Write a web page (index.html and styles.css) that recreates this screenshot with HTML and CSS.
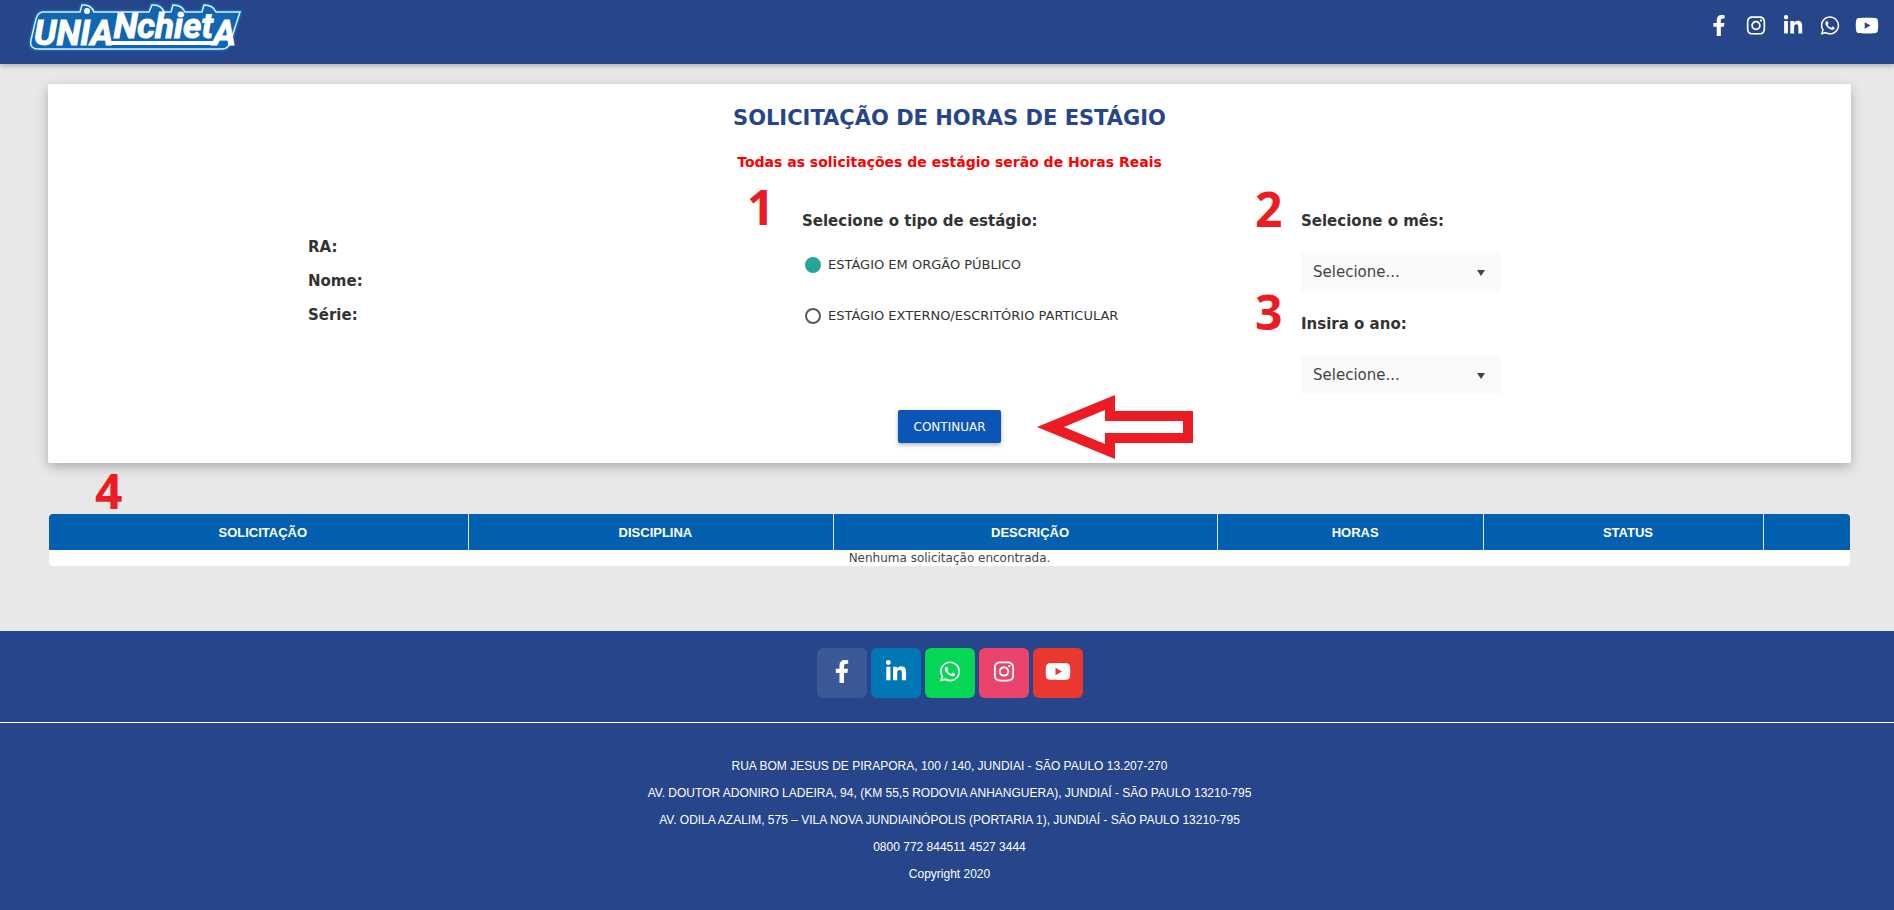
FILE: index.html
```html
<!DOCTYPE html>
<html lang="pt-BR">
<head>
    <meta charset="UTF-8">
    <meta name="viewport" content="width=device-width, initial-scale=1.0">
    <title>Solicitação de Horas de Estágio</title>
    <link rel="stylesheet" href="styles.css">
</head>
<body>

    <!-- Ícones usados no topo e no rodapé -->
    <svg class="sprite" aria-hidden="true">
        <symbol id="facebook" viewBox="0 0 320 512"><path d="M279.14 288l14.22-92.66h-88.91v-60.13c0-25.35 12.42-50.06 52.24-50.06h40.42V6.26S260.43 0 225.36 0c-73.22 0-121.08 44.38-121.08 124.72v70.62H22.89V288h81.39v224h100.17V288z"/></symbol>
        <symbol id="instagram" viewBox="0 0 448 512"><path d="M224.1 141c-63.6 0-114.9 51.3-114.9 114.9s51.3 114.9 114.9 114.9S339 319.5 339 255.9 287.7 141 224.1 141zm0 189.6c-41.1 0-74.7-33.5-74.7-74.7s33.5-74.7 74.7-74.7 74.7 33.5 74.7 74.7-33.6 74.7-74.7 74.7zm146.4-194.3c0 14.9-12 26.8-26.8 26.8-14.9 0-26.8-12-26.8-26.8s12-26.8 26.8-26.8 26.8 12 26.8 26.8zm76.1 27.2c-1.7-35.9-9.9-67.7-36.2-93.9-26.2-26.2-58-34.4-93.9-36.2-37-2.1-147.9-2.1-184.9 0-35.8 1.7-67.6 9.9-93.9 36.1s-34.4 58-36.2 93.9c-2.1 37-2.1 147.9 0 184.9 1.7 35.9 9.9 67.7 36.2 93.9s58 34.4 93.9 36.2c37 2.1 147.9 2.1 184.9 0 35.9-1.7 67.7-9.9 93.9-36.2 26.2-26.2 34.4-58 36.2-93.9 2.1-37 2.1-147.8 0-184.8zM398.8 388c-7.8 19.6-22.9 34.7-42.6 42.6-29.5 11.7-99.5 9-132.1 9s-102.7 2.6-132.1-9c-19.6-7.8-34.7-22.9-42.6-42.6-11.7-29.5-9-99.5-9-132.1s-2.6-102.7 9-132.1c7.8-19.6 22.9-34.7 42.6-42.6 29.5-11.7 99.5-9 132.1-9s102.7-2.6 132.1 9c19.6 7.8 34.7 22.9 42.6 42.6 11.7 29.5 9 99.5 9 132.1s2.7 102.7-9 132.1z"/></symbol>
        <symbol id="linkedin" viewBox="0 0 448 512"><path d="M100.28 448H7.4V148.9h92.88zM53.79 108.1C24.09 108.1 0 83.5 0 53.8a53.79 53.79 0 0 1 107.58 0c0 29.7-24.1 54.3-53.79 54.3zM447.9 448h-92.68V302.4c0-34.7-.7-79.2-48.29-79.2-48.29 0-55.69 37.7-55.69 76.7V448h-92.78V148.9h89.08v40.8h1.3c12.4-23.5 42.69-48.3 87.88-48.3 94 0 111.28 61.9 111.28 142.3V448z"/></symbol>
        <symbol id="whatsapp" viewBox="0 0 448 512"><path d="M380.9 97.1C339 55.1 283.2 32 223.9 32c-122.4 0-222 99.6-222 222 0 39.1 10.2 77.3 29.6 111L0 480l117.7-30.9c32.4 17.7 68.9 27 106.1 27h.1c122.3 0 224.1-99.6 224.1-222 0-59.3-25.2-115-67.1-157zm-157 341.6c-33.2 0-65.7-8.9-94-25.7l-6.7-4-69.8 18.3L72 359.2l-4.4-7c-18.5-29.4-28.2-63.3-28.2-98.2 0-101.7 82.8-184.5 184.6-184.5 49.3 0 95.6 19.2 130.4 54.1 34.8 34.9 56.2 81.2 56.1 130.5 0 101.8-84.9 184.6-186.6 184.6zm101.2-138.2c-5.5-2.8-32.8-16.2-37.9-18-5.1-1.9-8.8-2.8-12.5 2.8-3.7 5.6-14.3 18-17.6 21.8-3.2 3.7-6.5 4.2-12 1.4-32.6-16.3-54-29.1-75.5-66-5.7-9.8 5.7-9.1 16.3-30.3 1.8-3.7.9-6.9-.5-9.7-1.4-2.8-12.5-30.1-17.1-41.2-4.5-10.8-9.1-9.3-12.5-9.5-3.2-.2-6.9-.2-10.6-.2-3.7 0-9.7 1.4-14.8 6.9-5.1 5.6-19.4 19-19.4 46.3 0 27.3 19.9 53.7 22.6 57.4 2.8 3.7 39.1 59.7 94.8 83.8 35.2 15.2 49 16.5 66.6 13.9 10.7-1.6 32.8-13.4 37.4-26.4 4.6-13 4.6-24.1 3.2-26.4-1.3-2.5-5-3.9-10.5-6.6z"/></symbol>
        <symbol id="youtube" viewBox="0 0 576 512"><path d="M549.655 124.083c-6.281-23.65-24.787-42.276-48.284-48.597C458.781 64 288 64 288 64S117.22 64 74.629 75.486c-23.497 6.322-42.003 24.947-48.284 48.597-11.412 42.867-11.412 132.305-11.412 132.305s0 89.438 11.412 132.305c6.281 23.65 24.787 41.5 48.284 47.821C117.22 448 288 448 288 448s170.78 0 213.371-11.486c23.497-6.321 42.003-24.171 48.284-47.821 11.412-42.867 11.412-132.305 11.412-132.305s0-89.438-11.412-132.305zm-317.51 213.508V175.185l142.739 81.205-142.739 81.201z"/></symbol>
    </svg>

    <!-- Topo -->
    <header class="topbar">
        <a href="#" class="logo" aria-label="UniAnchieta">
            <svg width="216" height="52" viewBox="0 0 216 52">
                <path class="logo-glow" d="M16 12H53L55 5Q64 4 67 12H122L125 5Q134 4 137 12H144L146 5Q155 5 158 12H175L177 5Q186 5 189 12H213L203 43Q201 49 195 49H12Q2 49 4 40L9 19Q11 12 16 12Z"/>
                <path class="logo-line" d="M16 12H53L55 5Q64 4 67 12H122L125 5Q134 4 137 12H144L146 5Q155 5 158 12H175L177 5Q186 5 189 12H213L203 43Q201 49 195 49H12Q2 49 4 40L9 19Q11 12 16 12Z"/>
                <circle class="logo-dot" cx="60" cy="11" r="3"/>
                <path class="logo-bar" d="M80 43H190"/>
                <text class="logo-text" x="7" y="45">UNIA<tspan dy="-7">Nchiet</tspan><tspan dy="7">A</tspan></text>
            </svg>
        </a>
        <nav class="topbar-social">
            <a href="#" aria-label="Facebook"><svg><use href="#facebook"/></svg></a>
            <a href="#" aria-label="Instagram"><svg><use href="#instagram"/></svg></a>
            <a href="#" aria-label="LinkedIn"><svg><use href="#linkedin"/></svg></a>
            <a href="#" aria-label="WhatsApp"><svg><use href="#whatsapp"/></svg></a>
            <a href="#" aria-label="YouTube"><svg><use href="#youtube"/></svg></a>
        </nav>
    </header>

    <main>
        <!-- Formulário -->
        <form class="card">
            <h1>SOLICITAÇÃO DE HORAS DE ESTÁGIO</h1>
            <p class="aviso">Todas as solicitações de estágio serão de Horas Reais</p>

            <div class="form-grid">
                <div class="aluno">
                    <p>RA:</p>
                    <p>Nome:</p>
                    <p>Série:</p>
                </div>
                <fieldset class="tipo">
                    <legend>Selecione o tipo de estágio:</legend>
                    <span class="passo">1</span>
                    <label class="radio"><input type="radio" name="tipo" checked>ESTÁGIO EM ORGÃO PÚBLICO</label>
                    <label class="radio"><input type="radio" name="tipo">ESTÁGIO EXTERNO/ESCRITÓRIO PARTICULAR</label>
                </fieldset>
                <div class="periodo">
                    <div class="campo">
                        <span class="passo">2</span>
                        <label for="mes">Selecione o mês:</label>
                        <div class="select-box">
                            <select id="mes"><option>Selecione...</option></select>
                        </div>
                    </div>
                    <div class="campo">
                        <span class="passo">3</span>
                        <label for="ano">Insira o ano:</label>
                        <div class="select-box">
                            <select id="ano"><option>Selecione...</option></select>
                        </div>
                    </div>
                </div>
            </div>

            <div class="acoes">
                <button type="button" class="btn">CONTINUAR</button>
                <svg class="seta" width="156" height="64" viewBox="0 0 156 64" aria-hidden="true">
                    <path fill-rule="evenodd" d="M0 32L78 0V16H156V48H78V64ZM27 32L68 49V38H146V26H68V15Z"/>
                </svg>
            </div>
        </form>

        <!-- Solicitações -->
        <section class="lista">
            <span class="passo">4</span>
            <table>
                <colgroup>
                    <col class="col-solicitacao">
                    <col class="col-disciplina">
                    <col class="col-descricao">
                    <col class="col-horas">
                    <col class="col-status">
                    <col>
                </colgroup>
                <thead>
                    <tr>
                        <th>SOLICITAÇÃO</th>
                        <th>DISCIPLINA</th>
                        <th>DESCRIÇÃO</th>
                        <th>HORAS</th>
                        <th>STATUS</th>
                        <th></th>
                    </tr>
                </thead>
                <tbody>
                    <tr>
                        <td colspan="6">Nenhuma solicitação encontrada.</td>
                    </tr>
                </tbody>
            </table>
        </section>
    </main>

    <!-- Rodapé -->
    <footer>
        <div class="footer-social">
            <a href="#" class="facebook" aria-label="Facebook"><svg><use href="#facebook"/></svg></a>
            <a href="#" class="linkedin" aria-label="LinkedIn"><svg><use href="#linkedin"/></svg></a>
            <a href="#" class="whatsapp" aria-label="WhatsApp"><svg><use href="#whatsapp"/></svg></a>
            <a href="#" class="instagram" aria-label="Instagram"><svg><use href="#instagram"/></svg></a>
            <a href="#" class="youtube" aria-label="YouTube"><svg><use href="#youtube"/></svg></a>
        </div>
        <div class="endereco">
            <p>RUA BOM JESUS DE PIRAPORA, 100 / 140, JUNDIAI - SÃO PAULO 13.207-270</p>
            <p>AV. DOUTOR ADONIRO LADEIRA, 94, (KM 55,5 RODOVIA ANHANGUERA), JUNDIAÍ - SÃO PAULO 13210-795</p>
            <p>AV. ODILA AZALIM, 575 – VILA NOVA JUNDIAINÓPOLIS (PORTARIA 1), JUNDIAÍ - SÃO PAULO 13210-795</p>
            <p>0800 772 844511 4527 3444</p>
            <p>Copyright 2020</p>
        </div>
    </footer>

</body>
</html>
```
FILE: styles.css
```css
:root {
    --azul: #26458b;
    --tabela: #0360b1;
    --botao: #0b54b8;
    --vermelho: #ed1c24;
    --fundo: #e8e8e8;
    --texto: #333;
}

* {
    margin: 0;
    padding: 0;
    box-sizing: border-box;
}

body {
    background: var(--fundo);
    color: var(--texto);
    font-family: Verdana, 'DejaVu Sans', sans-serif;
    font-size: 15px;
    min-height: 100vh;
    display: flex;
    flex-direction: column;
}

.sprite {
    position: absolute;
    width: 0;
    height: 0;
}

/* Topo */
.topbar {
    display: flex;
    justify-content: space-between;
    height: 64px;
    padding: 0 9px 0 27px;
    background: var(--azul);
    box-shadow: 0 2px 5px rgba(0,0,0,0.25);
}

.logo svg {
    display: block;
}

.logo-glow {
    fill: #1166b3;
    stroke: #1166b3;
    stroke-width: 5;
}

.logo-line {
    fill: none;
    stroke: #e4eef7;
    stroke-width: 1.5;
}

.logo-dot {
    fill: #fff;
}

.logo-bar {
    stroke: #fff;
    stroke-width: 4;
}

.logo-text {
    fill: #fff;
    stroke: #fff;
    stroke-width: 1;
    font-family: Roboto, sans-serif;
    font-size: 35px;
    font-weight: bold;
    font-style: italic;
}

.topbar-social {
    display: flex;
    padding-top: 15px;
}

.topbar-social a {
    width: 37px;
    text-align: center;
}

.topbar-social svg {
    width: 24px;
    height: 21px;
    fill: #fff;
}

/* Cartão */
main {
    padding: 20px 43px 65px 48px;
}

.card {
    background: #fff;
    border-radius: 2px;
    box-shadow: 0 4px 12px rgba(0,0,0,0.25);
    padding: 20px 0;
    text-align: center;
}

h1 {
    color: var(--azul);
    font-size: 21px;
    line-height: 28px;
}

.aviso {
    color: #f00;
    font-size: 14px;
    font-weight: bold;
    line-height: 20px;
    margin-top: 20px;
}

.form-grid {
    display: grid;
    grid-template-columns: 260fr 494fr 499fr 550fr;
    margin-top: 38px;
    text-align: left;
}

.aluno {
    grid-column: 2;
    padding-top: 20px;
    font-weight: bold;
}

.aluno p {
    line-height: 34px;
}

fieldset {
    position: relative;
    border: none;
}

legend,
.campo label {
    display: block;
    font-weight: bold;
    line-height: 22px;
}

.radio {
    display: flex;
    align-items: center;
    gap: 7px;
    margin: 20px 0 0 3px;
    font-size: 13px;
    line-height: 25px;
}

.radio + .radio {
    margin-top: 26px;
}

.radio input {
    appearance: none;
    width: 16px;
    height: 16px;
    border: 2px solid #5a5a5a;
    border-radius: 50%;
}

.radio input:checked {
    background: #26a69a;
    border-color: #26a69a;
}

.campo {
    position: relative;
}

.campo + .campo {
    margin-top: 22px;
}

.select-box {
    position: relative;
    width: 200px;
    margin-top: 21px;
}

.select-box::after {
    content: "";
    position: absolute;
    right: 16px;
    top: 17px;
    border: 4px solid transparent;
    border-top: 6px solid #444;
    border-bottom: none;
    pointer-events: none;
}

select {
    appearance: none;
    display: block;
    width: 100%;
    height: 38px;
    padding: 0 12px;
    border: none;
    border-radius: 2px;
    background: #fafafa;
    color: #444;
    font-family: inherit;
    font-size: 15px;
}

/* Números dos passos */
.passo {
    position: absolute;
    left: -46px;
    top: -33px;
    color: var(--vermelho);
    font-family: 'Open Sans', sans-serif;
    font-size: 48px;
    font-weight: bold;
    line-height: 64px;
}

.tipo .passo {
    left: -55px;
    top: -57px;
}

.acoes {
    position: relative;
    display: flex;
    justify-content: center;
    margin-top: 16px;
}

.btn {
    height: 33px;
    padding: 0 16px;
    border: none;
    border-radius: 2px;
    background: var(--botao);
    box-shadow: 0 2px 4px rgba(0,0,0,0.3);
    color: #fff;
    font-family: inherit;
    font-size: 12px;
    cursor: pointer;
}

.seta {
    position: absolute;
    left: calc(50% + 87px);
    top: -15px;
    fill: var(--vermelho);
}

/* Tabela */
.lista {
    position: relative;
    margin: 51px 1px 0;
}

.lista .passo {
    left: 46px;
    top: -55px;
}

table {
    width: 100%;
    table-layout: fixed;
    border-collapse: separate;
    border-spacing: 0;
    border-radius: 4px;
    overflow: hidden;
    background: #fff;
}

.col-solicitacao { width: 23.3%; }
.col-disciplina { width: 20.3%; }
.col-descricao { width: 21.3%; }
.col-horas { width: 14.8%; }
.col-status { width: 15.5%; }

th {
    height: 36px;
    padding-left: 9px;
    background: var(--tabela);
    border-right: 1px solid #dfe9f3;
    color: #fff;
    font-family: 'Liberation Sans', Arial, sans-serif;
    font-size: 13px;
}

th:last-child {
    border-right: none;
}

td {
    color: #444;
    font-size: 12px;
    line-height: 16px;
    text-align: center;
}

/* Rodapé */
footer {
    flex: 1;
    background: var(--azul);
    color: #fff;
    text-align: center;
    font-family: 'Liberation Sans', Arial, sans-serif;
    font-size: 12px;
}

.footer-social {
    display: flex;
    justify-content: center;
    gap: 4px;
    padding: 17px 0 24px 5px;
    border-bottom: 1px solid #fff;
}

.footer-social a {
    display: flex;
    align-items: center;
    justify-content: center;
    width: 50px;
    height: 50px;
    padding-bottom: 3px;
    border-radius: 6px;
}

.footer-social svg {
    width: 26px;
    height: 23px;
    fill: #fff;
}

.facebook { background: #3b5998; }
.linkedin { background: #0077b5; }
.whatsapp { background: #05d755; }
.instagram { background: #ea446c; }
.youtube { background: #ea3830; }

.endereco {
    padding: 30px 0 12px 5px;
}

.endereco p {
    line-height: 27px;
}
```
